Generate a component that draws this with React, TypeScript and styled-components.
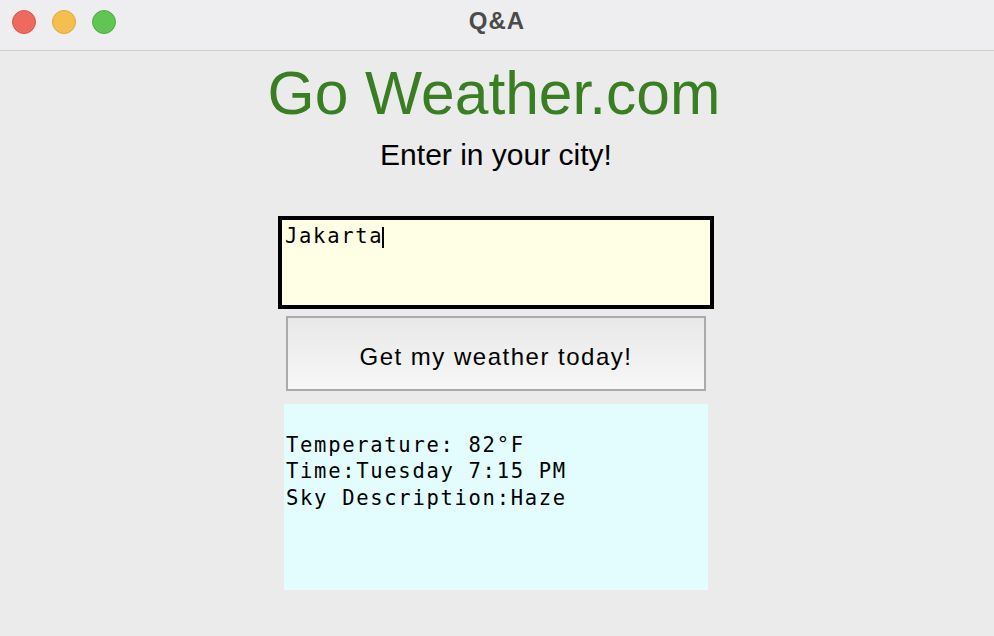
import styled, { createGlobalStyle } from "styled-components";

const GlobalStyle = createGlobalStyle`
  html, body {
    margin: 0;
    padding: 0;
    background: #ebebeb;
    font-family: "Liberation Sans", Arial, sans-serif;
  }
`;

const lights = ["#ee6a5f", "#f5bf4f", "#61c554"];
const lightBorders = ["#d7574c", "#dca73c", "#4fad43"];

export default function App() {
  return (
    <>
      <GlobalStyle />
      <Window>
        <TitleBar>
          <Lights>
            {lights.map((c, i) => (
              <Light key={c} color={c} edge={lightBorders[i]} />
            ))}
          </Lights>
          <WindowTitle>Q&amp;A</WindowTitle>
          <span />
        </TitleBar>
        <Content>
          <Heading>Go Weather.com</Heading>
          <Prompt>Enter in your city!</Prompt>
          <CityInput>
            Jakarta
            <Caret />
          </CityInput>
          <WeatherButton>Get my weather today!</WeatherButton>
          <Output>
            {"\nTemperature: 82°F\nTime:Tuesday 7:15 PM\nSky Description:Haze"}
          </Output>
        </Content>
      </Window>
    </>
  );
}

const Window = styled.div`
  width: 994px;
  height: 636px;
  overflow: hidden;
  background: #ebebeb;
`;

const TitleBar = styled.div`
  height: 50px;
  display: grid;
  grid-template-columns: 1fr auto 1fr;
  align-items: center;
  background: #eeeef0;
  border-bottom: 1px solid #cfcfcf;
  padding: 0 12px;
`;

const Lights = styled.div`
  display: flex;
  gap: 16px;
  padding-bottom: 7px;
`;

const Light = styled.span<{ color: string; edge: string }>`
  width: 22px;
  height: 22px;
  border-radius: 50%;
  background: ${(p) => p.color};
  border: 1px solid ${(p) => p.edge};
  box-sizing: content-box;
`;

const WindowTitle = styled.div`
  font-family: "Liberation Sans", Arial, sans-serif;
  font-weight: bold;
  font-size: 24px;
  letter-spacing: 1px;
  color: #4b4b4b;
  padding-bottom: 8px;
`;

const Content = styled.div`
  display: flex;
  flex-direction: column;
  align-items: center;
  padding-top: 7px;
  padding-right: 2px;
`;

const Heading = styled.h1`
  margin: 0 4px 0 0;
  font-family: "Liberation Sans", Arial, sans-serif;
  font-weight: normal;
  font-size: 60.5px;
  line-height: 70px;
  color: #3a7e24;
`;

const Prompt = styled.div`
  margin-top: 9px;
  font-size: 30px;
  line-height: 36px;
  color: #000;
`;

const mono = `"DejaVu Sans Mono", "Liberation Mono", monospace`;

const CityInput = styled.div`
  margin-top: 43px;
  width: 436px;
  height: 93px;
  box-sizing: border-box;
  border: 4px solid #000;
  background: #ffffe6;
  padding: 3px 3px;
  font-family: ${mono};
  font-size: 20.5px;
  line-height: 26px;
  letter-spacing: 1.7px;
  color: #000;
`;

const Caret = styled.span`
  display: inline-block;
  width: 2px;
  height: 21px;
  margin-left: -1px;
  background: #000;
  vertical-align: -5px;
`;

const WeatherButton = styled.button`
  margin-top: 7px;
  width: 420px;
  height: 75px;
  border: 2px solid #ababab;
  border-radius: 0;
  background: linear-gradient(#e8e8e8, #f7f7f7);
  font-family: "Liberation Sans", Arial, sans-serif;
  font-size: 24px;
  letter-spacing: 1.5px;
  color: #000;
  padding: 6px 0 0;
`;

const Output = styled.div`
  margin-top: 13px;
  width: 424px;
  height: 186px;
  box-sizing: border-box;
  background: #e3fdfe;
  padding: 1px 2px;
  white-space: pre;
  font-family: ${mono};
  font-size: 20.5px;
  line-height: 26.5px;
  letter-spacing: 1.7px;
  color: #000;
`;
